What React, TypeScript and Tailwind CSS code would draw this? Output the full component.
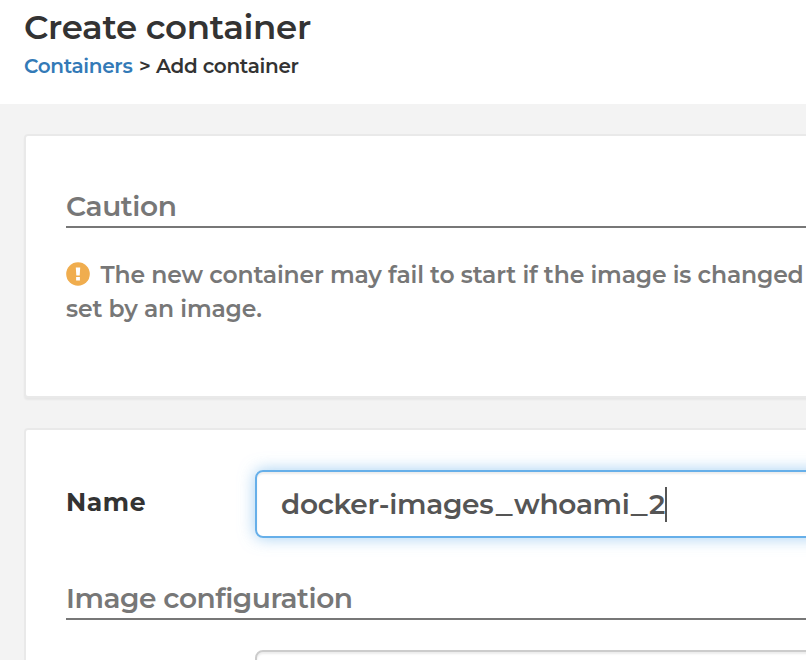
import React from "react";

function SectionTitle({ children, className }: { children: React.ReactNode; className: string }) {
  return (
    <h2 className={`h-[42px] border-b-2 border-[#777] whitespace-nowrap text-[28px] leading-10 font-semibold text-[#777] ${className}`}>
      {children}
    </h2>
  );
}

export default function App() {
  return (
    <div className="h-[660px] w-[806px] overflow-hidden bg-[#f3f3f3] font-['Montserrat','Inter',sans-serif] font-semibold text-[#333]">
      <header className="h-[104px] bg-white pl-6 whitespace-nowrap">
        <h1 className="h-[54px] text-[34px] leading-[54px] tracking-[-0.3px]">Create container</h1>
        <nav className="flex h-6 text-[20px] leading-6 tracking-[-0.3px]">
          <a className="w-[115px] text-[#337ab7]">Containers</a>
          <span className="w-[17px]">&gt;</span>
          <span>Add container</span>
        </nav>
      </header>

      <main className="flex flex-col gap-[30px] pt-[30px] pl-6">
        <section className="h-[264px] w-[840px] rounded-[4px] border-2 border-[#e9e9e9] bg-white pt-[50px] pl-10 shadow-[0_2px_2px_rgba(0,0,0,0.05)]">
          <SectionTitle className="tracking-[-0.4px]">Caution</SectionTitle>
          <div className="mt-[30px] text-[23.5px] leading-[34px] tracking-[-0.16px] whitespace-nowrap text-[#777]">
            <p className="flex items-center">
              <svg className="mr-[10.5px] -mt-[2px] h-6 w-6" viewBox="0 0 24 24" aria-hidden="true">
                <circle cx="12" cy="12" r="11.8" fill="#f0ad4e" />
                <path d="M9.8 5.5h4.4l-.5 8.1h-3.4zM10.1 15h3.8v3.4h-3.8z" fill="#fff" />
              </svg>
              <span>The new container may fail to start if the image is changed</span>
            </p>
            <p>set by an image.</p>
          </div>
        </section>

        <section className="h-[400px] w-[840px] rounded-[4px] border-2 border-[#e9e9e9] bg-white pt-10 pl-10">
          <div className="flex h-[68px]">
            <label className="w-[189px] text-[25px] leading-[64px] font-bold tracking-[0.6px]">Name</label>
            <div className="flex flex-1 items-center rounded-[8px] border-2 border-[#66afe9] pl-6 text-[28px] leading-[64px] tracking-[-0.3px] whitespace-nowrap text-[#555] shadow-[inset_0_2px_2px_rgba(0,0,0,0.075),0_0_16px_rgba(102,175,233,0.6)]">
              <span className="w-[213px]">docker-images</span>
              <span className="w-5 scale-x-[1.2] text-center">_</span>
              <span className="w-[115px]">whoami</span>
              <span className="w-5 scale-x-[1.2] text-center">_</span>
              <span className="w-4">2</span>
              <span className="h-[35px] w-[2px] bg-[#555]" />
            </div>
          </div>
          <SectionTitle className="mt-10 tracking-[-0.45px]">Image configuration</SectionTitle>
          <div className="mt-[30px] ml-[189px] h-[68px] rounded-[8px] border-2 border-[#ccc] shadow-[inset_0_2px_2px_rgba(0,0,0,0.075)]" />
        </section>
      </main>
    </div>
  );
}
